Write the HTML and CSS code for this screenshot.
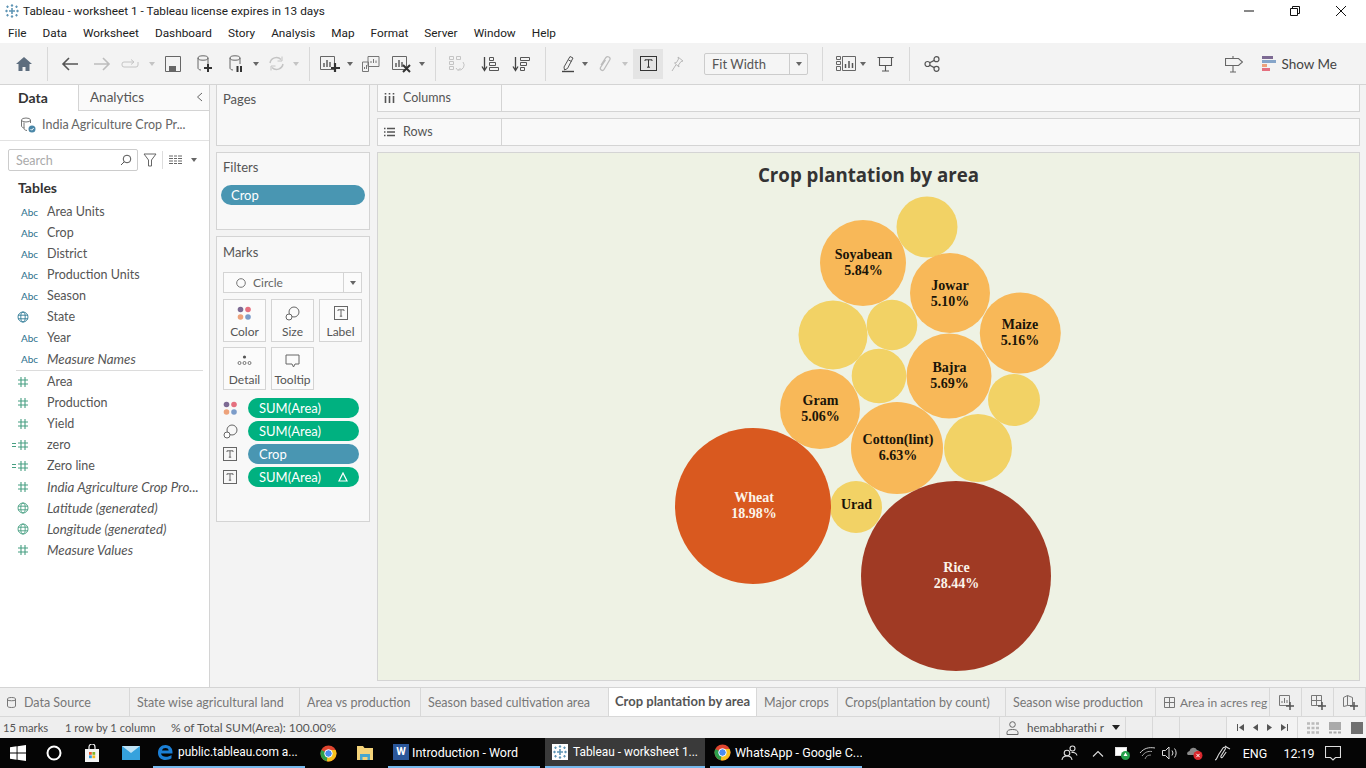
FILE: index.html
```html
<!DOCTYPE html>
<html lang="en">
<head>
<meta charset="utf-8">
<title>Tableau - worksheet 1</title>
<link rel="stylesheet" href="styles.css">
</head>
<body>
<svg class="defs" width="0" height="0" aria-hidden="true">
  <defs>
    <symbol id="logo" viewBox="0 0 16 16">
      <g stroke="#5f95b5" stroke-width="1.1" fill="none">
        <path d="M8 5v6M5 8h6" stroke-width="1.6"/>
        <path d="M8 1v3M6.8 2.5h2.4M8 12v3M6.8 13.5h2.4M1 8h3M2.5 6.8v2.4M12 8h3M13.5 6.8v2.4"/>
        <path d="M3.5 2.5v2.6M2.2 3.8h2.6M12.5 2.5v2.6M11.2 3.8h2.6M3.5 10.9v2.6M2.2 12.2h2.6M12.5 10.9v2.6M11.2 12.2h2.6"/>
      </g>
    </symbol>
    <symbol id="hash" viewBox="0 0 12 12">
      <path d="M4 1v10M8 1v10M1 4h10M1 8h10" stroke="#479f82" stroke-width="1.1" fill="none"/>
    </symbol>
    <symbol id="calc" viewBox="0 0 18 12">
      <path d="M10 1v10M14 1v10M7 4h10M7 8h10" stroke="#479f82" stroke-width="1.1" fill="none"/>
      <path d="M1 4.5h4M1 7.5h4" stroke="#479f82" stroke-width="1.1" fill="none"/>
    </symbol>
    <symbol id="globe-b" viewBox="0 0 12 12">
      <g fill="none" stroke="#2f7a96" stroke-width=".9"><circle cx="6" cy="6" r="5"/><ellipse cx="6" cy="6" rx="2.2" ry="5"/><path d="M1 4.2h10M1 7.8h10"/></g>
    </symbol>
    <symbol id="globe-g" viewBox="0 0 12 12">
      <g fill="none" stroke="#479f82" stroke-width=".9"><circle cx="6" cy="6" r="5"/><ellipse cx="6" cy="6" rx="2.2" ry="5"/><path d="M1 4.2h10M1 7.8h10"/></g>
    </symbol>
    <symbol id="tbox" viewBox="0 0 14 14">
      <rect x=".5" y=".5" width="13" height="13" fill="none" stroke="#666"/>
      <path d="M4 5V3.8h6V5M7 3.8v6.4M5.8 10.2h2.4" fill="none" stroke="#666"/>
    </symbol>
    <symbol id="sizeic" viewBox="0 0 15 15">
      <g fill="none" stroke="#666" stroke-width="1"><circle cx="9" cy="6" r="5"/><circle cx="4" cy="11" r="3" fill="#fff"/></g>
    </symbol>
    <symbol id="coloric" viewBox="0 0 15 15">
      <circle cx="3.5" cy="3.5" r="2.8" fill="#7d6a93"/><circle cx="11" cy="3.5" r="2.8" fill="#e5707f"/>
      <circle cx="3.5" cy="11" r="2.8" fill="#eda27b"/><circle cx="11" cy="11" r="2.8" fill="#7c9cc9"/>
    </symbol>
  </defs>
</svg>

<header class="titlebar">
  <svg class="logo" width="16" height="16"><use href="#logo"/></svg>
  <span class="title-text">Tableau - worksheet 1 - Tableau license expires in 13 days</span>
  <div class="winctl">
    <svg width="12" height="12" viewBox="0 0 12 12"><path d="M1 6h10" stroke="#111" fill="none"/></svg>
    <svg width="12" height="12" viewBox="0 0 12 12"><path d="M1.5 3.5h7v7h-7zM3.5 3.5v-2h7v7h-2" stroke="#111" fill="none"/></svg>
    <svg width="12" height="12" viewBox="0 0 12 12"><path d="M1 1l10 10M11 1L1 11" stroke="#111" fill="none"/></svg>
  </div>
</header>

<nav class="menubar">
  <span>File</span><span>Data</span><span>Worksheet</span><span>Dashboard</span><span>Story</span><span>Analysis</span><span>Map</span><span>Format</span><span>Server</span><span>Window</span><span>Help</span>
</nav>

<div class="toolbar">
  <i class="cell"><svg width="18" height="16" viewBox="0 0 18 16"><path d="M9 1L1 8h2.5v7h4v-4h3v4h4V8H17z" fill="#5d6d7e"/></svg></i>
  <i class="cell"><b class="vsep"></b></i>
  <i class="cell"><svg width="18" height="14" viewBox="0 0 18 14"><path d="M17 7H2M8 1L2 7l6 6" fill="none" stroke="#555" stroke-width="1.6"/></svg></i>
  <i class="cell"><svg width="18" height="14" viewBox="0 0 18 14"><path d="M1 7h15M10 1l6 6-6 6" fill="none" stroke="#bdbdbd" stroke-width="1.6"/></svg></i>
  <i class="cell"><svg width="20" height="12" viewBox="0 0 20 12"><path d="M12 4H3a2 2 0 0 0-2 2v1a2 2 0 0 0 2 2h12a2 2 0 0 0 2-2V4M10 1.5L13 4l-3 2.500" fill="none" stroke="#c4c4c4"/></svg></i>
  <i class="cell"><b class="dd off"></b></i>
  <i class="cell"><svg width="16" height="16" viewBox="0 0 16 16"><path d="M.5.5h15v15H.5z" fill="none" stroke="#666"/><path d="M4 15v-5h7v5z" fill="#666"/></svg></i>
  <i class="cell"><svg width="16" height="18" viewBox="0 0 16 18"><g fill="none" stroke="#666"><ellipse cx="6" cy="3" rx="5" ry="2.200"/><path d="M1 3v10c0 1 1.200 2 3 2M11 3v6"/></g><path d="M11 9v8M7 13h8" stroke="#333" stroke-width="2"/></svg></i>
  <i class="cell"><svg width="15" height="18" viewBox="0 0 15 18"><g fill="none" stroke="#666"><ellipse cx="6" cy="3" rx="5" ry="2.200"/><path d="M1 3v10c0 1 1.200 2 3 2M11 3v6"/></g><path d="M8.500 11v6M12 11v6" stroke="#333" stroke-width="2"/></svg></i>
  <i class="cell"><b class="dd"></b></i>
  <i class="cell"><svg width="17" height="15" viewBox="0 0 17 15"><path d="M2 7a6.500 6.500 0 0 1 11-3.500M15 8a6.500 6.500 0 0 1-11 3.500" fill="none" stroke="#c4c4c4" stroke-width="1.500"/><path d="M14 .5V5H9.500M3 14.500V10h4.500" fill="none" stroke="#c4c4c4"/></svg></i>
  <i class="cell"><b class="dd off"></b></i>
  <i class="cell"><b class="vsep"></b></i>
  <i class="cell"><svg width="21" height="18" viewBox="0 0 21 18"><path d="M.5 1.500h14v13H.5z" fill="none" stroke="#666"/><path d="M4 8v4M7 5v7M10 7v5" stroke="#555" stroke-width="1.400"/><path d="M15 8v9M11 13h9" stroke="#333" stroke-width="2.200"/></svg></i>
  <i class="cell"><b class="dd"></b></i>
  <i class="cell"><svg width="18" height="16" viewBox="0 0 18 16"><path d="M6 .5h11v10H6z" fill="#f3f3f3" stroke="#777"/><path d="M9 7V5M11.500 7V3M14 7V4.500" stroke="#777"/><path d="M.5 6h6v9.500H.5z" fill="none" stroke="#777"/><path d="M2.500 13v-2M4.500 13V9" stroke="#777"/></svg></i>
  <i class="cell"><svg width="20" height="18" viewBox="0 0 20 18"><path d="M.5 1.500h14v13H.5z" fill="none" stroke="#666"/><path d="M4 8v4M7 5v7M10 7v5" stroke="#555" stroke-width="1.400"/><path d="M11 10l7 7M18 10l-7 7" stroke="#333" stroke-width="2"/></svg></i>
  <i class="cell"><b class="dd"></b></i>
  <i class="cell"><b class="vsep"></b></i>
  <i class="cell"><svg width="18" height="18" viewBox="0 0 18 18"><g fill="none" stroke="#c4c4c4"><path d="M1.500 1.500h4v3h-4zM1.500 6.500h4v3h-4zM1.500 11.500h4v3h-4zM8.500 1.500h4v3h-4z"/><path d="M15 7a5 5 0 0 1-5 8M8 13l2 2.500L12.500 13"/></g></svg></i>
  <i class="cell"><svg width="19" height="16" viewBox="0 0 19 16"><path d="M3.500 1v13M1 10.500l2.500 4 2.500-4" fill="none" stroke="#444" stroke-width="1.300"/><path d="M8.500 1.500h4v3h-4zM8.500 6.500h6v3h-6zM8.500 11.500h9v3h-9z" fill="none" stroke="#555"/></svg></i>
  <i class="cell"><svg width="19" height="16" viewBox="0 0 19 16"><path d="M3.500 1v13M1 10.500l2.500 4 2.500-4" fill="none" stroke="#444" stroke-width="1.300"/><path d="M8.500 1.500h9v3h-9zM8.500 6.500h6v3h-6zM8.500 11.500h4v3h-4z" fill="none" stroke="#555"/></svg></i>
  <i class="cell"><b class="vsep"></b></i>
  <i class="cell"><svg width="14" height="18" viewBox="0 0 14 18"><path d="M3 12L9 1.500l3 1.500-5.500 10.500-3 1.500zM7.500 5l3 1.500" fill="none" stroke="#555"/><path d="M1 16.500h12" stroke="#444" stroke-width="1.400"/></svg></i>
  <i class="cell"><b class="dd"></b></i>
  <i class="cell"><svg width="14" height="18" viewBox="0 0 14 18"><path d="M3 10l5-7.500c1.500-2 5-.2 3.800 2.300L6 14.500c-1.200 2-4.500.5-3.500-2L7.500 5" fill="none" stroke="#bcbcbc" stroke-width="1.300"/></svg></i>
  <i class="cell"><b class="dd off"></b></i>
  <i class="cell"></i>
  <i class="cell active"><svg width="17" height="15" viewBox="0 0 17 15"><rect x=".5" y=".5" width="16" height="14" fill="none" stroke="#333"/><path d="M5 5V3.800h7V5M8.500 3.800v7.400M7 11.200h3" fill="none" stroke="#333"/></svg></i>
  <i class="cell"><svg width="13" height="16" viewBox="0 0 13 16"><path d="M7 1l5 4-2 .5-2.500 3.500.5 2L3.500 7l2-.5L7.500 3zM4.800 9L1 15" fill="none" stroke="#b8b8b8"/></svg></i>
  <i class="cell"></i>
  <div class="combo"><span class="combo-text">Fit Width</span><span class="combo-btn"><b class="dd"></b></span></div>
  <i class="cell"><b class="vsep"></b></i>
  <i class="cell"><svg width="20" height="15" viewBox="0 0 20 15"><path d="M.5.500h4v3h-4zM.5 5.500h4v3h-4zM.5 10.500h4v4h-4zM6.500.500h13v14h-13z" fill="none" stroke="#666"/><path d="M9.500 12V8M13 12V5M16.500 12V7" stroke="#555" stroke-width="1.500"/></svg></i>
  <i class="cell"><b class="dd"></b></i>
  <i class="cell"><svg width="17" height="16" viewBox="0 0 17 16"><path d="M.5 1.500h16M2.500 1.500v8h12v-8M8.500 9.500v5M5 15h7" fill="none" stroke="#555" stroke-width="1.100"/></svg></i>
  <i class="cell"><b class="vsep"></b></i>
  <i class="cell"><svg width="16" height="16" viewBox="0 0 16 16"><g fill="none" stroke="#555" stroke-width="1.200"><circle cx="3.500" cy="8" r="2.500"/><circle cx="12.500" cy="3.200" r="2.500"/><circle cx="12.500" cy="12.800" r="2.500"/><path d="M5.700 6.800l4.600-2.400M5.700 9.200l4.600 2.400"/></g></svg></i>
  <div class="tb-right">
    <svg width="18" height="18" viewBox="0 0 18 18"><path d="M.5 3.500h13l4 3.500-4 3.500H.5zM8 1v2.500M8 10.500V17M5 17h6" fill="none" stroke="#666" stroke-width="1.100"/></svg>
    <svg class="showme-ic" width="14" height="16" viewBox="0 0 14 16"><rect width="11" height="3" fill="#7d6a93"/><rect y="4" width="14" height="3" fill="#86a5c9"/><rect y="8" width="5" height="3" fill="#eda27b"/><rect y="12" width="8" height="3" fill="#e5707f"/></svg>
    <span class="showme">Show Me</span>
  </div>
</div>

<main class="main">
  <aside class="datapane">
    <div class="dtabs">
      <span class="dtab on">Data</span>
      <span class="dtab">Analytics<svg class="chev" width="7" height="10" viewBox="0 0 7 10"><path d="M6 1L1.500 5 6 9" fill="none" stroke="#666"/></svg></span>
    </div>
    <div class="source">
      <svg width="16" height="16" viewBox="0 0 16 16"><g fill="none" stroke="#777"><ellipse cx="6" cy="3" rx="4.500" ry="2"/><path d="M1.500 3v6c0 1 1.500 2 3 2M10.500 3v3"/><path d="M4 5.500v6c0 1 1 1.800 3 2"/></g><circle cx="12" cy="12" r="3.500" fill="#4a87a8"/><path d="M10.500 12l1.200 1.200 2-2.200" stroke="#fff" fill="none"/></svg>
      <span>India Agriculture Crop Pr...</span>
    </div>
    <div class="searchrow">
      <div class="searchbox"><span>Search</span><svg width="12" height="12" viewBox="0 0 12 12"><circle cx="7" cy="5" r="3.800" fill="none" stroke="#555"/><path d="M4.300 7.700L1 11" stroke="#555"/></svg></div>
      <svg class="funnel" width="14" height="14" viewBox="0 0 14 14"><path d="M1 1h12L8.500 7v6h-3V7z" fill="none" stroke="#666"/></svg>
      <b class="minisep"></b>
      <svg width="13" height="10" viewBox="0 0 13 10"><path d="M0 1h4M5 1h3M9 1h4M0 3.500h4M5 3.500h3M9 3.500h4M0 6h4M5 6h3M9 6h4M0 8.500h4M5 8.500h3M9 8.500h4" stroke="#666"/></svg>
      <b class="dd sm"></b>
    </div>
    <h2 class="tables">Tables</h2>
    <ul class="fields">
      <li><span class="abc">Abc</span>Area Units</li>
      <li><span class="abc">Abc</span>Crop</li>
      <li><span class="abc">Abc</span>District</li>
      <li><span class="abc">Abc</span>Production Units</li>
      <li><span class="abc">Abc</span>Season</li>
      <li><span class="fic"><svg width="12" height="12"><use href="#globe-b"/></svg></span>State</li>
      <li><span class="abc">Abc</span>Year</li>
      <li class="em"><span class="abc">Abc</span>Measure Names</li>
    </ul>
    <hr class="fsep">
    <ul class="fields">
      <li><span class="fic"><svg width="12" height="12"><use href="#hash"/></svg></span>Area</li>
      <li><span class="fic"><svg width="12" height="12"><use href="#hash"/></svg></span>Production</li>
      <li><span class="fic"><svg width="12" height="12"><use href="#hash"/></svg></span>Yield</li>
      <li><span class="fic wide"><svg width="18" height="12"><use href="#calc"/></svg></span>zero</li>
      <li><span class="fic wide"><svg width="18" height="12"><use href="#calc"/></svg></span>Zero line</li>
      <li class="em"><span class="fic"><svg width="12" height="12"><use href="#hash"/></svg></span>India Agriculture Crop Pro...</li>
      <li class="em"><span class="fic"><svg width="12" height="12"><use href="#globe-g"/></svg></span>Latitude (generated)</li>
      <li class="em"><span class="fic"><svg width="12" height="12"><use href="#globe-g"/></svg></span>Longitude (generated)</li>
      <li class="em"><span class="fic"><svg width="12" height="12"><use href="#hash"/></svg></span>Measure Values</li>
    </ul>
  </aside>

  <section class="cards">
    <div class="card pages"><h3>Pages</h3></div>
    <div class="card filters"><h3>Filters</h3><div class="pill blue wide">Crop</div></div>
    <div class="card marks">
      <h3>Marks</h3>
      <div class="marktype"><span class="mt-main"><svg width="10" height="10" viewBox="0 0 10 10"><circle cx="5" cy="5" r="4.300" fill="none" stroke="#777"/></svg>Circle</span><span class="mt-btn"><b class="dd"></b></span></div>
      <div class="markbtns">
        <div class="mbtn"><svg width="15" height="15"><use href="#coloric"/></svg><span>Color</span></div>
        <div class="mbtn"><svg width="15" height="15"><use href="#sizeic"/></svg><span>Size</span></div>
        <div class="mbtn"><svg width="14" height="14"><use href="#tbox"/></svg><span>Label</span></div>
        <div class="mbtn"><svg width="15" height="12" viewBox="0 0 15 12"><circle cx="7.500" cy="3" r="1.600" fill="#555"/><g fill="none" stroke="#555" stroke-width=".8"><circle cx="2.500" cy="9" r="1.500"/><circle cx="7.500" cy="9" r="1.500"/><circle cx="12.500" cy="9" r="1.500"/></g></svg><span>Detail</span></div>
        <div class="mbtn"><svg width="15" height="14" viewBox="0 0 15 14"><path d="M1 1h13v9h-4l-1.500 3L7 10H1z" fill="none" stroke="#666"/></svg><span>Tooltip</span></div>
      </div>
      <div class="mpills">
        <div class="mrow"><svg width="15" height="15"><use href="#coloric"/></svg><div class="pill green">SUM(Area)</div></div>
        <div class="mrow"><svg width="15" height="15"><use href="#sizeic"/></svg><div class="pill green">SUM(Area)</div></div>
        <div class="mrow"><svg width="14" height="14"><use href="#tbox"/></svg><div class="pill blue">Crop</div></div>
        <div class="mrow"><svg width="14" height="14"><use href="#tbox"/></svg><div class="pill green delta">SUM(Area)<svg width="10" height="10" viewBox="0 0 10 10"><path d="M5 1L1 9h8z" fill="none" stroke="#fff" stroke-width="1.200"/></svg></div></div>
      </div>
    </div>
  </section>

  <section class="workspace">
    <div class="shelf cols"><div class="shelf-l"><svg width="11" height="10" viewBox="0 0 11 10"><path d="M1.500 3v7M5.500 3v7M9.500 3v7" stroke="#555" stroke-width="1.600"/><path d="M1.500 0v1.500M5.500 0v1.500M9.500 0v1.500" stroke="#555" stroke-width="1.600"/></svg>Columns</div></div>
    <div class="shelf rows"><div class="shelf-l"><svg width="11" height="10" viewBox="0 0 11 10"><path d="M3 1.500h8M3 5h8M3 8.500h8M0 1.500h1.500M0 5h1.500M0 8.500h1.500" stroke="#555" stroke-width="1.500"/></svg>Rows</div></div>
    <div class="viz">
      <h1 class="viz-title">Crop plantation by area</h1>
      <svg class="bubbles" width="981" height="527" viewBox="378 153 981 527">
        <circle class="c-yel" cx="927" cy="227" r="30.500"/>
        <circle class="c-org" cx="863" cy="263" r="43"/>
        <circle class="c-org" cx="950" cy="293" r="40"/>
        <circle class="c-org" cx="1020.300" cy="333" r="40.500"/>
        <circle class="c-yel" cx="833" cy="335" r="34.500"/>
        <circle class="c-yel" cx="892" cy="325" r="25.300"/>
        <circle class="c-yel" cx="879" cy="376" r="27.300"/>
        <circle class="c-org" cx="949" cy="376" r="42.500"/>
        <circle class="c-yel" cx="1014" cy="400" r="26"/>
        <circle class="c-org" cx="820" cy="409" r="40"/>
        <circle class="c-yel" cx="978" cy="448" r="34"/>
        <circle class="c-org" cx="897" cy="448" r="46"/>
        <circle class="c-yel" cx="856" cy="507" r="26"/>
        <circle class="c-wheat" cx="753" cy="506" r="78"/>
        <circle class="c-rice" cx="956" cy="576" r="95"/>
        <g class="lbl">
          <text x="863.500" y="259">Soyabean</text><text x="863.500" y="275">5.84%</text>
          <text x="950" y="290">Jowar</text><text x="950" y="306">5.10%</text>
          <text x="1020" y="329">Maize</text><text x="1020" y="345">5.16%</text>
          <text x="949.500" y="372">Bajra</text><text x="949.500" y="388">5.69%</text>
          <text x="820.500" y="405">Gram</text><text x="820.500" y="421">5.06%</text>
          <text x="898" y="444">Cotton(lint)</text><text x="898" y="460">6.63%</text>
          <text x="856.500" y="509">Urad</text>
        </g>
        <g class="lbl light">
          <text x="754" y="502">Wheat</text><text x="754" y="518">18.98%</text>
          <text x="956.500" y="572">Rice</text><text x="956.500" y="588">28.44%</text>
        </g>
      </svg>
    </div>
  </section>
</main>

<div class="tabbar">
  <span class="tab ds"><svg width="9" height="11" viewBox="0 0 9 11"><path d="M.5 2v7c0 1 1.500 1.500 4 1.500s4-.5 4-1.500V2c0-1-1.500-1.500-4-1.500S.5 1 .5 2zM.5 3c1 1 7 1 8 0" fill="none" stroke="#777"/></svg>Data Source</span>
  <span class="tab">State wise agricultural land</span>
  <span class="tab">Area vs production</span>
  <span class="tab">Season based cultivation area</span>
  <span class="tab current">Crop plantation by area</span>
  <span class="tab">Major crops</span>
  <span class="tab">Crops(plantation by count)</span>
  <span class="tab">Season wise production</span>
  <span class="tab clip"><svg width="11" height="11" viewBox="0 0 11 11"><path d="M.5.500h10v10H.5zM.5 5.500h10M5.500.500v10" fill="none" stroke="#777"/></svg>Area in acres reg</span>
  <span class="tab ic"><svg width="15" height="15" viewBox="0 0 15 15"><path d="M.5.500h10v10H.5z" fill="none" stroke="#777"/><path d="M3 8V6M5.500 8V3M8 8V5" stroke="#777"/><path d="M11 7v8M7 11h8" stroke="#555" stroke-width="1.500"/></svg></span>
  <span class="tab ic"><svg width="15" height="15" viewBox="0 0 15 15"><path d="M.5.500h10v10H.5zM.5 5.500h10M5.500.500v10" fill="none" stroke="#777"/><path d="M11 7v8M7 11h8" stroke="#555" stroke-width="1.500"/></svg></span>
  <span class="tab ic"><svg width="15" height="15" viewBox="0 0 15 15"><path d="M.5 2.500l4-2 5 2v8h-5l-4 1z" fill="none" stroke="#777"/><path d="M4.500.500v10" stroke="#777"/><path d="M11 7v8M7 11h8" stroke="#555" stroke-width="1.500"/></svg></span>
</div>

<div class="statusbar">
  <span class="st tight">15 marks</span>
  <span class="st tight">1 row by 1 column</span>
  <span class="st">% of Total SUM(Area): 100.00%</span>
  <span class="st"></span>
  <span class="st user"><svg width="13" height="14" viewBox="0 0 13 14"><circle cx="6.500" cy="3.500" r="2.800" fill="none" stroke="#666"/><path d="M1 13.500v-2c0-2 2-3 5.500-3s5.500 1 5.500 3v2z" fill="none" stroke="#666"/></svg><span>hemabharathi r</span><b class="dd dark"></b></span>
  <span class="st cellb"></span>
  <span class="st cellb"></span>
  <span class="st cellb"></span>
  <span class="st nav">
    <svg width="7" height="7" viewBox="0 0 7 7"><path d="M.5 0v7" stroke="#555"/><path d="M7 0v7L2 3.500z" fill="#555"/></svg>
    <svg width="5" height="7" viewBox="0 0 5 7"><path d="M5 0v7L0 3.500z" fill="#555"/></svg>
    <svg width="5" height="7" viewBox="0 0 5 7"><path d="M0 0v7l5-3.500z" fill="#555"/></svg>
    <svg width="7" height="7" viewBox="0 0 7 7"><path d="M6.500 0v7" stroke="#555"/><path d="M0 0v7l5-3.500z" fill="#555"/></svg>
  </span>
  <span class="st views">
    <svg width="12" height="12" viewBox="0 0 12 12"><path d="M0 1.500h12M0 6h12M0 10.500h12" stroke="#bbb" stroke-width="2.500" stroke-dasharray="3 1.500"/></svg>
    <svg width="12" height="12" viewBox="0 0 12 12"><rect width="12" height="8" fill="#aaa"/><path d="M0 10.500h12" stroke="#aaa" stroke-width="2" stroke-dasharray="3 1.500"/></svg>
    <svg width="12" height="12" viewBox="0 0 12 12"><rect width="12" height="12" fill="#707070"/></svg>
  </span>
</div>

<footer class="taskbar">
  <i class="tk"><svg width="16" height="16" viewBox="0 0 16 16"><path d="M0 2.300L6.600 1.300v6.300H0zM7.500 1.200L16 0v7.600H7.500zM0 8.400h6.600v6.300L0 13.700zM7.500 8.400H16V16l-8.500-1.200z" fill="#fff"/></svg></i>
  <i class="tk"><svg width="16" height="16" viewBox="0 0 16 16"><circle cx="8" cy="8" r="6.500" fill="none" stroke="#fff" stroke-width="2"/></svg></i>
  <i class="tk"><svg width="16" height="18" viewBox="0 0 16 18"><path d="M1 5h14v13H1z" fill="#f5f5f5"/><path d="M5 5V3a3 3 0 0 1 6 0v2" fill="none" stroke="#f5f5f5" stroke-width="1.200"/><rect x="5" y="8" width="2.800" height="2.800" fill="#e8592b"/><rect x="8.400" y="8" width="2.800" height="2.800" fill="#7fb52a"/><rect x="5" y="11.400" width="2.800" height="2.800" fill="#2a9be0"/><rect x="8.400" y="11.400" width="2.800" height="2.800" fill="#f6b91c"/></svg></i>
  <i class="tk"><svg width="18" height="14" viewBox="0 0 18 14"><rect width="18" height="14" fill="#35a2dd"/><path d="M0 0l9 7 9-7z" fill="#bfe3f6"/></svg></i>
  <i></i>
  <span class="tk-app sm"><svg width="17" height="18" viewBox="0 0 17 18"><path d="M2 10.500h13.500c.5-5-2.500-8.500-7-8.500S1 5 1 10c0 4.500 3.500 7 7.500 7 2.500 0 4.500-.7 6-1.700v-3.300c-1.500 1-3.500 1.800-5.500 1.800-2.500 0-4.500-1-5-3.300zM5 7.500C5.300 5.800 6.800 5 8.500 5s3 .8 3.200 2.500z" fill="#1b7fd6" fill-rule="evenodd"/></svg><span>public.tableau.com a...</span></span>
  <i class="tk"><svg width="17" height="17" viewBox="0 0 17 17"><circle cx="8.500" cy="8.500" r="8" fill="#e0452f"/><path d="M8.500 8.500L1.300 5a8 8 0 0 0 5.500 11.300z" fill="#2c9f4a"/><path d="M8.500 5h7.100a8 8 0 0 1-8.800 11.300z" fill="#f6c21c"/><circle cx="8.500" cy="8.500" r="3.800" fill="#4a8cf0" stroke="#fff"/></svg></i>
  <i class="tk"><svg width="16" height="14" viewBox="0 0 16 14"><path d="M0 0h6l1.500 2H16v12H0z" fill="#f4d37a"/><path d="M3 8h10v6h-2.500v-3h-5v3H3z" fill="#46a6cf"/></svg></i>
  <i></i>
  <span class="tk-app word"><span class="wordic">W</span><span>Introduction - Word</span></span>
  <i></i>
  <span class="tk-app on sm"><svg class="tb-logo" width="16" height="16"><use href="#logo"/></svg><span>Tableau - worksheet 1...</span></span>
  <i></i>
  <span class="tk-app"><svg width="17" height="17" viewBox="0 0 17 17"><circle cx="8.500" cy="8.500" r="8" fill="#e0452f"/><path d="M8.500 8.500L1.300 5a8 8 0 0 0 5.500 11.300z" fill="#2c9f4a"/><path d="M8.500 5h7.100a8 8 0 0 1-8.800 11.300z" fill="#f6c21c"/><circle cx="8.500" cy="8.500" r="3.800" fill="#4a8cf0" stroke="#fff"/></svg><span>WhatsApp - Google C...</span></span>
  <i></i>
  <i class="tk"><svg width="17" height="16" viewBox="0 0 17 16"><g fill="none" stroke="#ddd" stroke-width="1.100"><circle cx="6" cy="8" r="2.800"/><path d="M1 15c.3-2.800 2.200-4 5-4s4.700 1.200 5 4"/><circle cx="11.500" cy="3.500" r="2.500"/><path d="M10.500 7.500c2.500-.5 5 .8 5.500 3"/></g></svg></i>
  <i class="tk"><svg width="12" height="7" viewBox="0 0 12 7"><path d="M1 6.500l5-5 5 5" fill="none" stroke="#ddd" stroke-width="1.100"/></svg></i>
  <i class="tk"><svg width="15" height="14" viewBox="0 0 15 14"><rect x=".5" y="1.500" width="11" height="8" fill="#fff" stroke="#ddd"/><circle cx="10.500" cy="9.500" r="4.500" fill="#23a04a"/><path d="M10.500 6.500l-2 3.500h4z" fill="#fff"/></svg></i>
  <i class="tk"><svg width="17" height="15" viewBox="0 0 17 15"><g fill="none" stroke="#ccc"><path d="M1 7c4-5 9-6 15-5"/><path d="M3 10c3-4 6-5 10-4.500" stroke="#aaa"/><path d="M6 13c1-3 3-4 6-4" stroke="#888"/></g></svg></i>
  <i class="tk"><svg width="17" height="14" viewBox="0 0 17 14"><g fill="none" stroke="#ddd"><path d="M.5 4.500h3l3.500-3.500v12l-3.500-3.500h-3z"/><path d="M10 4.500a4 4 0 0 1 0 5M12.500 2.500a7 7 0 0 1 0 9"/></g></svg></i>
  <i class="tk"><svg width="17" height="14" viewBox="0 0 17 14"><path d="M1 8a3 3 0 0 1 2.500-3A4 4 0 0 1 11 4a3 3 0 0 1 2 5H2z" fill="#8a8a8a"/><circle cx="12" cy="9.500" r="4.500" fill="#d9262c"/><path d="M10.300 7.800l3.400 3.400M13.700 7.800l-3.400 3.400" stroke="#fff"/></svg></i>
  <i class="tk"><svg width="17" height="17" viewBox="0 0 17 17"><path d="M1 15c2 0 2-3 4-6l4-6c1-1.500 3-.5 2.300 1L7 11c-.7 1.500.7 2.300 1.700 1l3.500-5M11 1c1 1 3 2 5 3" fill="none" stroke="#ddd" stroke-width="1.100"/></svg></i>
  <span class="tk-text">ENG</span>
  <span class="tk-text">12:19</span>
  <i class="tk"><svg width="16" height="16" viewBox="0 0 16 16"><path d="M.5 1.500h15v11h-5l-2.500 2.500-2.500-2.500h-5z" fill="none" stroke="#ddd" stroke-width="1.100"/></svg></i>
</footer>
</body>
</html>
```
FILE: styles.css
```css
* { box-sizing: border-box; margin: 0; padding: 0; }
html, body { width: 1366px; height: 768px; overflow: hidden; }
body {
  display: flex; flex-direction: column;
  font-family: "Lato", "Liberation Sans", sans-serif;
  font-size: 12.5px; color: #555; background: #f3f3f3;
}
.defs { position: absolute; }
i { font-style: normal; }
svg { display: block; flex: none; }

.titlebar {
  height: 22px; flex: none; background: #fff; display: flex; align-items: center;
  padding-left: 4px; font-family: "Roboto", sans-serif; font-size: 11.800px; color: #222;
}
.logo { margin-right: 3px; }
.winctl { margin-left: auto; display: grid; grid-template-columns: 46px 46px 46px; margin-right: 2px; justify-items: center; }

.menubar {
  height: 21px; flex: none; background: #fff; display: flex; align-items: center;
  padding-left: 8px; gap: 16px; font-family: "Roboto", sans-serif; font-size: 11.800px; color: #222;
}

.toolbar {
  height: 42px; flex: none; background: #f3f3f3; border-bottom: 1px solid #d4d4d4;
  display: grid; align-items: center; padding-left: 8px;
  grid-template-columns: 32px 14px 32px 32px 26px 16px 26px 38px 24px 16px 24px 16px 10px 32px 8px 34px 28px 12px 14px 30px 36px 26px 22px 24px 10px 30px 10px 3px 30px 28px 13px 104px 28px 20px 14px 30px 18px 28px 1fr;
}
.cell { display: flex; align-items: center; justify-content: center; height: 30px; }
.cell.active { background: #e4e4e4; }
.vsep { display: block; width: 1px; height: 34px; background: #d8d8d8; }
.dd { display: block; width: 0; height: 0; border-left: 3.500px solid transparent; border-right: 3.500px solid transparent; border-top: 4px solid #666; }
.dd.off { border-top-color: #c4c4c4; }
.dd.dark { border-top-color: #222; border-left-width: 4.500px; border-right-width: 4.500px; border-top-width: 5px; }
.combo { display: flex; height: 22px; border: 1px solid #ccc; border-radius: 2px; background: #f5f5f5; font-size: 13px; color: #555; align-items: stretch; }
.combo-text { flex: 1; padding-left: 7px; line-height: 20px; }
.combo-btn { width: 18px; border-left: 1px solid #ccc; display: flex; align-items: center; justify-content: center; }
.tb-right { display: flex; align-items: center; justify-content: flex-end; padding-right: 29px; }
.showme-ic { margin-left: 19px; margin-right: 5px; }
.showme { font-size: 13.500px; color: #444; }

.main { flex: 1; min-height: 0; display: grid; grid-template-columns: 210px 161px 1fr; }

.datapane { background: #fff; border-right: 1px solid #d4d4d4; }
.dtabs { display: grid; grid-template-columns: 78px 1fr; height: 26px; }
.dtab { display: flex; align-items: center; padding: 0 0 2px 11px; font-size: 13.500px; color: #555; background: #fafafa; border-left: 1px solid #d4d4d4; border-bottom: 1px solid #d4d4d4; position: relative; }
.dtab.on { background: #fff; border: 0; padding-left: 18px; font-size: 14px; font-weight: 700; color: #333; }
.chev { margin-left: auto; margin-right: 6px; }
.source { height: 30px; border-bottom: 1px solid #e2e2e2; display: flex; align-items: center; padding: 0 0 2px 20px; gap: 6px; color: #666; }
.searchrow { margin-top: 8px; height: 22px; display: flex; align-items: center; padding-left: 8px; }
.searchbox { width: 130px; height: 22px; border: 1px solid #ccc; border-radius: 2px; display: flex; align-items: center; justify-content: space-between; padding: 0 5px 0 7px; color: #aaa; }
.funnel { margin-left: 5px; }
.minisep { width: 1px; height: 18px; background: #ddd; margin: 0 6px 0 5px; }
.dd.sm { margin-left: 9px; }
.tables { height: 30px; line-height: 33px; font-size: 14px; font-weight: 700; color: #333; padding-left: 18px; }
.fields { list-style: none; }
.fields li { height: 21px; display: flex; align-items: center; color: #555; }
.fields li.em { font-style: italic; font-size: 13.300px; }
.abc { width: 47px; padding-left: 21px; font-size: 10px; color: #2b6f8c; flex: none; font-style: normal; }
.fic { width: 47px; flex: none; display: flex; justify-content: flex-end; padding-right: 18px; }
.fsep { border: 0; height: 1px; background: #dcdcdc; margin: 1px 6px 0 16px; }

.cards { padding: 0 0 0 6px; display: flex; flex-direction: column; gap: 6px; width: 161px; }
.card { width: 154px; background: #f8f8f8; border: 1px solid #d4d4d4; }
.card h3 { font-weight: 400; font-size: 13px; color: #555; padding: 6px 0 0 6px; height: 30px; }
.marks h3 { padding-top: 7px; }
.pages { height: 61px; border-top: 0; }
.filters { height: 78px; }
.marks { height: 286px; padding: 0; }
.pill { height: 20px; line-height: 20px; border-radius: 10px; color: #fff; padding-left: 11px; font-size: 13px; }
.pill.blue { background: #4996b2; }
.pill.green { background: #00b180; }
.pill.wide { margin: 2px 4px 0 4px; padding-left: 10px; }
.marktype { margin: 5px 7px 0 6px; height: 21px; border: 1px solid #d4d4d4; display: flex; background: #fbfbfb; font-size: 12px; color: #666; }
.mt-main { flex: 1; display: flex; align-items: center; gap: 7px; padding-left: 12px; }
.mt-btn { width: 18px; border-left: 1px solid #d4d4d4; display: flex; align-items: center; justify-content: center; }
.markbtns { display: grid; grid-template-columns: 43px 43px 43px; column-gap: 5px; row-gap: 5px; margin: 6px 7px 0 6px; }
.mbtn { height: 43px; border: 1px solid #d4d4d4; background: #fbfbfb; display: flex; flex-direction: column; align-items: center; justify-content: space-between; padding: 6px 0 2px; font-size: 12px; color: #555; }
.mpills { margin: 8px 0 0 6px; display: flex; flex-direction: column; gap: 3px; }
.mrow { display: grid; grid-template-columns: 25px 111px; align-items: center; height: 20px; }
.delta { display: flex; align-items: center; justify-content: space-between; padding-right: 11px; }

.workspace { padding: 0 6px 0 6px; display: flex; flex-direction: column; min-width: 0; }
.shelf { background: #f9f9f9; border: 1px solid #d4d4d4; display: flex; }
.shelf.cols { height: 27px; border-top: 0; margin-bottom: 6px; }
.shelf.rows { height: 28px; margin-bottom: 6px; }
.shelf-l { width: 124px; border-right: 1px solid #d4d4d4; display: flex; align-items: center; padding: 0 0 1px 6px; gap: 8px; color: #555; }
.viz { height: 529px; background: #eef2e4; border: 1px solid #d4d4d4; position: relative; }
.viz-title { font-family: "Open Sans", sans-serif; font-weight: 700; font-size: 18.700px; color: #333; text-align: center; line-height: 28px; margin-top: 8px; }
.bubbles { position: absolute; left: 0; top: 0; }
.c-yel { fill: #f2d265; }
.c-org { fill: #f8b858; }
.c-wheat { fill: #d9591f; }
.c-rice { fill: #a03a24; }
.lbl text { font-family: "Liberation Serif", "DejaVu Serif", serif; font-weight: 700; font-size: 14px; text-anchor: middle; fill: #1a1408; }
.lbl.light text { fill: #fbf4ea; }

.tabbar {
  height: 30px; flex: none; background: #efefef; border-top: 1px solid #d4d4d4; border-bottom: 1px solid #d8d8d8;
  display: grid; grid-template-columns: 130px 170px 121px 188px 148px 81px 168px 150px 114px 32px 32px 32px;
}
.tab { display: flex; align-items: center; padding-left: 7px; gap: 6px; border-right: 1px solid #d8d8d8; color: #777; overflow: hidden; white-space: nowrap; }
.tab.ds { gap: 8px; }
.tab.current { background: #fff; color: #555; font-weight: 700; font-size: 13px; padding: 0 0 2px 6px; }
.tab.ic { padding-left: 9px; }
.tab.clip { padding-left: 8px; gap: 5px; font-size: 12px; }

.statusbar {
  height: 21px; flex: none; background: #eee; display: grid; font-size: 12px; color: #555; align-items: stretch;
  grid-template-columns: 65px 106px 828px 0 127px 27px 27px 47px 71px 68px;
}
.st { display: flex; align-items: center; white-space: nowrap; padding-left: 3px; }
.st + .st { padding-left: 0; }
.st.tight { font-size: 11.200px; }
.user { border-left: 1px solid #d8d8d8; border-right: 1px solid #d8d8d8; padding-left: 6px !important; gap: 8px; font-size: 11.600px; }
.cellb { border-right: 1px solid #d8d8d8; }
.nav { gap: 9px; justify-content: center; border-right: 1px solid #d8d8d8; background: #f3f3f3; }
.views { gap: 10px; padding-left: 9px !important; background: #f3f3f3; }

.taskbar {
  height: 30px; flex: none; background: #050505; color: #fff; display: grid; align-items: center;
  font-family: "Roboto", sans-serif; font-size: 12.500px;
  grid-template-columns: 36px 36px 40px 38px 3px 152px 46px 28px 9px 152px 5px 160px 5px 152px 192px 30px 28px 20px 30px 16px 32px 24px 42px 46px 22px 22px;
}
.tk { display: flex; justify-content: center; align-items: center; }
.tk-app { height: 30px; display: flex; align-items: center; gap: 4px; padding-left: 4px; border-bottom: 2px solid #76b9ed; white-space: nowrap; overflow: hidden; }
.tk-app.sm { font-size: 11.900px; }
.tk-app.on { background: #3a3a3a; padding-left: 7px; gap: 5px; }
.tk-app.word { padding-left: 5px; gap: 3px; }
.wordic { width: 16px; height: 16px; background: #2b579a; font-weight: 700; font-size: 11px; text-align: center; line-height: 16px; color: #fff; }
.tb-logo { background: #fff; }
.tk-text { text-align: center; }
```
